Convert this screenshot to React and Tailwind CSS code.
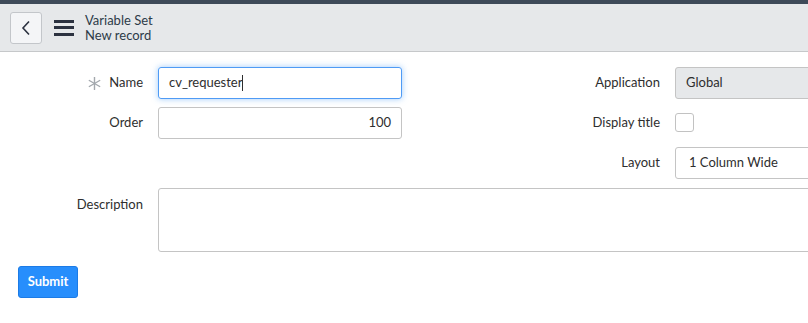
import { useState } from 'react';

const font = { fontFamily: 'Lato, "Noto Sans", sans-serif' };

const Asterisk = () => (
  <svg width="13" height="13" viewBox="0 0 13 13" className="mr-[8px]">
    <g stroke="#a3a8ad" strokeWidth="1.4" strokeLinecap="round">
      <line x1="6.5" y1="0.5" x2="6.5" y2="12.5" />
      <line x1="1.3" y1="3.5" x2="11.7" y2="9.5" />
      <line x1="1.3" y1="9.5" x2="11.7" y2="3.5" />
    </g>
  </svg>
);

const Label = ({ children, className = '' }) => (
  <div className={`flex items-center justify-end pr-[15px] text-[13px] text-[#2e2e2e] shrink-0 ${className}`}>
    {children}
  </div>
);

export default function App() {
  const [checked, setChecked] = useState(false);

  return (
    <div className="w-[808px] h-[323px] overflow-hidden bg-white" style={font}>
      <div className="h-[4px] bg-[#3e4a59]" />

      {/* header */}
      <div className="h-[48px] bg-[#e6e8ea] border-b border-[#c6c8ca] flex items-center pl-[10px]">
        <button className="w-[32px] h-[32px] rounded-[3px] border border-[#c3c6ca] bg-[#f4f5f7] flex items-center justify-center">
          <svg width="10" height="16" viewBox="0 0 10 16">
            <path d="M8 1.5 L2 8 L8 14.5" fill="none" stroke="#2c3240" strokeWidth="1.6" />
          </svg>
        </button>
        <div className="ml-[12px] w-[20px] flex flex-col gap-[3.5px]">
          <div className="h-[3px] bg-[#2c3240]" />
          <div className="h-[3px] bg-[#2c3240]" />
          <div className="h-[3px] bg-[#2c3240]" />
        </div>
        <div className="ml-[11px] flex flex-col text-[13px] leading-[15px] text-[#2d3b48]">
          <span>Variable Set</span>
          <span>New record</span>
        </div>
      </div>

      {/* form */}
      <div className="pt-[15px]">
        <div className="flex">
          {/* left column */}
          <div className="w-[402px] shrink-0 flex flex-col gap-[8px]">
            <div className="flex h-[32px]">
              <Label className="w-[158px]">
                <Asterisk />
                Name
              </Label>
              <div className="w-[244px] h-[32px] rounded-[3px] border border-[#4f9bf5] shadow-[0_0_6px_rgba(80,160,245,0.55)] flex items-center px-[10px] text-[13px] text-[#2e2e2e]">
                cv_requester
                <span className="inline-block w-px h-[16px] bg-[#2e2e2e]" />
              </div>
            </div>
            <div className="flex h-[32px]">
              <Label className="w-[158px]">Order</Label>
              <div className="w-[244px] h-[32px] rounded-[3px] border border-[#c4c4c4] flex items-center justify-end px-[10px] text-[13px] text-[#2e2e2e]">
                100
              </div>
            </div>
          </div>

          {/* right column */}
          <div className="w-[430px] shrink-0 flex flex-col gap-[8px]">
            <div className="flex h-[32px]">
              <Label className="w-[273px]">Application</Label>
              <div className="w-[150px] h-[32px] shrink-0 rounded-[3px] border border-[#c4c4c4] bg-[#e6e8ea] flex items-center px-[10px] text-[13px] text-[#2e2e2e]">
                Global
              </div>
            </div>
            <div className="flex h-[32px]">
              <Label className="w-[273px]">Display title</Label>
              <div className="w-[150px] shrink-0 flex items-center pb-[2px]">
                <button
                  onClick={() => setChecked(!checked)}
                  className="w-[19px] h-[19px] rounded-[3px] border border-[#c2c2c2] bg-white"
                />
              </div>
            </div>
            <div className="flex h-[32px]">
              <Label className="w-[273px]">Layout</Label>
              <div className="w-[150px] h-[32px] shrink-0 rounded-[3px] border border-[#c4c4c4] flex items-center px-[13px] text-[13px] text-[#2e2e2e]">
                1 Column Wide
              </div>
            </div>
          </div>
        </div>

        <div className="flex mt-[9px]">
          <div className="w-[158px] shrink-0 flex justify-end pr-[15px] pt-[7px] text-[13px] text-[#2e2e2e]">
            Description
          </div>
          <div className="w-[680px] h-[64px] shrink-0 rounded-[3px] border border-[#c4c4c4]" />
        </div>

        <div className="pl-[18px] mt-[14px]">
          <button className="w-[60px] h-[32px] rounded-[3px] bg-[#278efc] border border-[#1c7be6] text-white text-[13px] font-bold">
            Submit
          </button>
        </div>
      </div>
    </div>
  );
}
